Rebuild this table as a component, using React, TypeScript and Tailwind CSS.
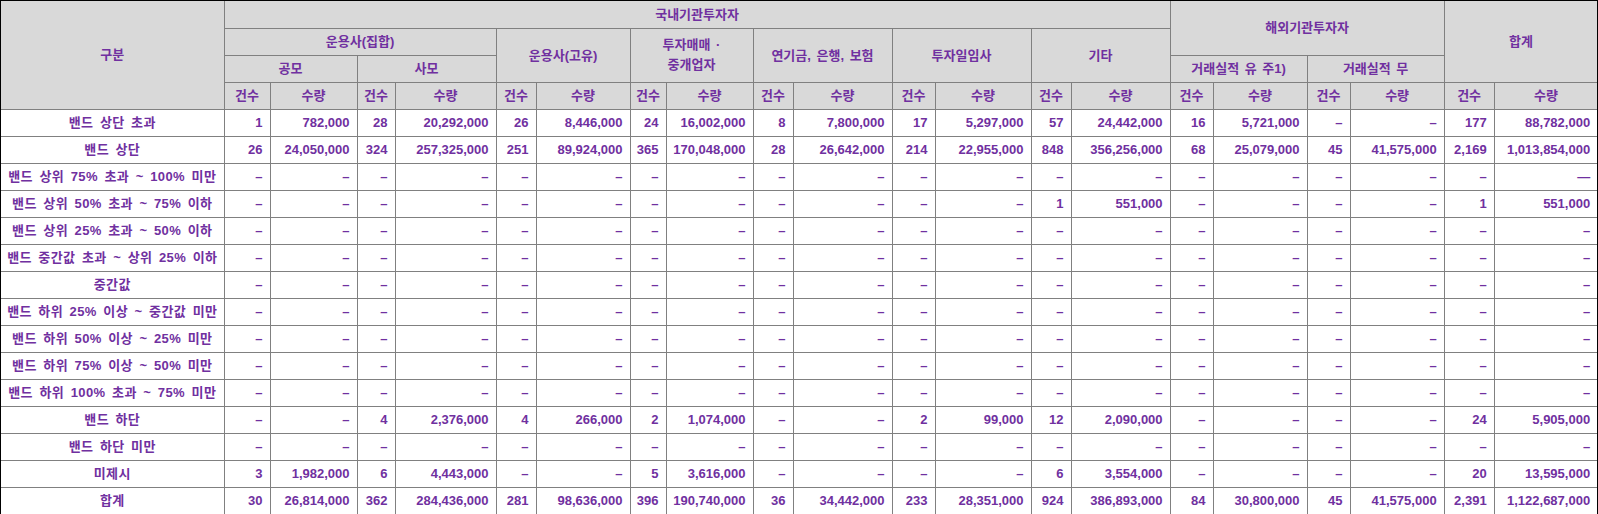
const COL_WIDTHS = [223, 46, 87, 38, 101, 40, 94, 36, 87, 40, 99, 43, 96, 40, 99, 43, 94, 43, 94, 50, 103];

const D = "–";

const ROWS: { label: string; values: string[] }[] = [
  {
    label: "밴드 상단 초과",
    values: ["1", "782,000", "28", "20,292,000", "26", "8,446,000", "24", "16,002,000", "8", "7,800,000", "17", "5,297,000", "57", "24,442,000", "16", "5,721,000", D, D, "177", "88,782,000"],
  },
  {
    label: "밴드 상단",
    values: ["26", "24,050,000", "324", "257,325,000", "251", "89,924,000", "365", "170,048,000", "28", "26,642,000", "214", "22,955,000", "848", "356,256,000", "68", "25,079,000", "45", "41,575,000", "2,169", "1,013,854,000"],
  },
  { label: "밴드 상위 75% 초과 ~ 100% 미만", values: [...Array(19).fill(D), "—"] },
  {
    label: "밴드 상위 50% 초과 ~ 75% 이하",
    values: [D, D, D, D, D, D, D, D, D, D, D, D, "1", "551,000", D, D, D, D, "1", "551,000"],
  },
  { label: "밴드 상위 25% 초과 ~ 50% 이하", values: Array(20).fill(D) },
  { label: "밴드 중간값 초과 ~ 상위 25% 이하", values: Array(20).fill(D) },
  { label: "중간값", values: Array(20).fill(D) },
  { label: "밴드 하위 25% 이상 ~ 중간값 미만", values: Array(20).fill(D) },
  { label: "밴드 하위 50% 이상 ~ 25% 미만", values: Array(20).fill(D) },
  { label: "밴드 하위 75% 이상 ~ 50% 미만", values: Array(20).fill(D) },
  { label: "밴드 하위 100% 초과 ~ 75% 미만", values: Array(20).fill(D) },
  {
    label: "밴드 하단",
    values: [D, D, "4", "2,376,000", "4", "266,000", "2", "1,074,000", D, D, "2", "99,000", "12", "2,090,000", D, D, D, D, "24", "5,905,000"],
  },
  { label: "밴드 하단 미만", values: Array(20).fill(D) },
  {
    label: "미제시",
    values: ["3", "1,982,000", "6", "4,443,000", D, D, "5", "3,616,000", D, D, D, D, "6", "3,554,000", D, D, D, D, "20", "13,595,000"],
  },
  {
    label: "합계",
    values: ["30", "26,814,000", "362", "284,436,000", "281", "98,636,000", "396", "190,740,000", "36", "34,442,000", "233", "28,351,000", "924", "386,893,000", "84", "30,800,000", "45", "41,575,000", "2,391", "1,122,687,000"],
  },
];

const th = "border border-[#808080] bg-[#d9d9d9] text-center align-middle font-bold p-0 [word-spacing:2px]";
const td = "border border-[#808080] bg-white align-middle font-bold p-0";

export default function App() {
  return (
    <div
      className="w-[1598px] h-[514px] border border-black bg-white text-[13px] leading-none text-[#7030a0]"
      style={{ fontFamily: '"Liberation Sans", "Noto Sans CJK KR", sans-serif' }}
    >
      <table className="w-full h-full table-fixed border-collapse border-hidden">
        <colgroup>
          {COL_WIDTHS.map((w, i) => (
            <col key={i} style={{ width: w }} />
          ))}
        </colgroup>
        <thead>
          <tr className="h-[27px]">
            <th rowSpan={4} className={th}>구분</th>
            <th colSpan={14} className={th}>국내기관투자자</th>
            <th colSpan={4} rowSpan={2} className={th}>해외기관투자자</th>
            <th colSpan={2} rowSpan={3} className={th}>합계</th>
          </tr>
          <tr className="h-[27px]">
            <th colSpan={4} className={th}>운용사(집합)</th>
            <th colSpan={2} rowSpan={2} className={th}>운용사(고유)</th>
            <th colSpan={2} rowSpan={2} className={th}>
              <div className="leading-[20px]">
                투자매매 ·<br />중개업자
              </div>
            </th>
            <th colSpan={2} rowSpan={2} className={th}>연기금, 은행, 보험</th>
            <th colSpan={2} rowSpan={2} className={th}>투자일임사</th>
            <th colSpan={2} rowSpan={2} className={th}>기타</th>
          </tr>
          <tr className="h-[27px]">
            <th colSpan={2} className={th}>공모</th>
            <th colSpan={2} className={th}>사모</th>
            <th colSpan={2} className={th}>거래실적 유 주1)</th>
            <th colSpan={2} className={th}>거래실적 무</th>
          </tr>
          <tr className="h-[27px]">
            {Array.from({ length: 10 }).flatMap((_, i) => [
              <th key={`c${i}`} className={th}>건수</th>,
              <th key={`q${i}`} className={th}>수량</th>,
            ])}
          </tr>
        </thead>
        <tbody>
          {ROWS.map((row) => (
            <tr key={row.label} className="h-[27px]">
              <td className={`${td} text-center whitespace-nowrap tracking-[0.4px] [word-spacing:2.5px]`}>{row.label}</td>
              {row.values.map((v, i) => (
                <td key={i} className={`${td} text-right pr-[7px]`}>
                  {v}
                </td>
              ))}
            </tr>
          ))}
        </tbody>
      </table>
    </div>
  );
}
